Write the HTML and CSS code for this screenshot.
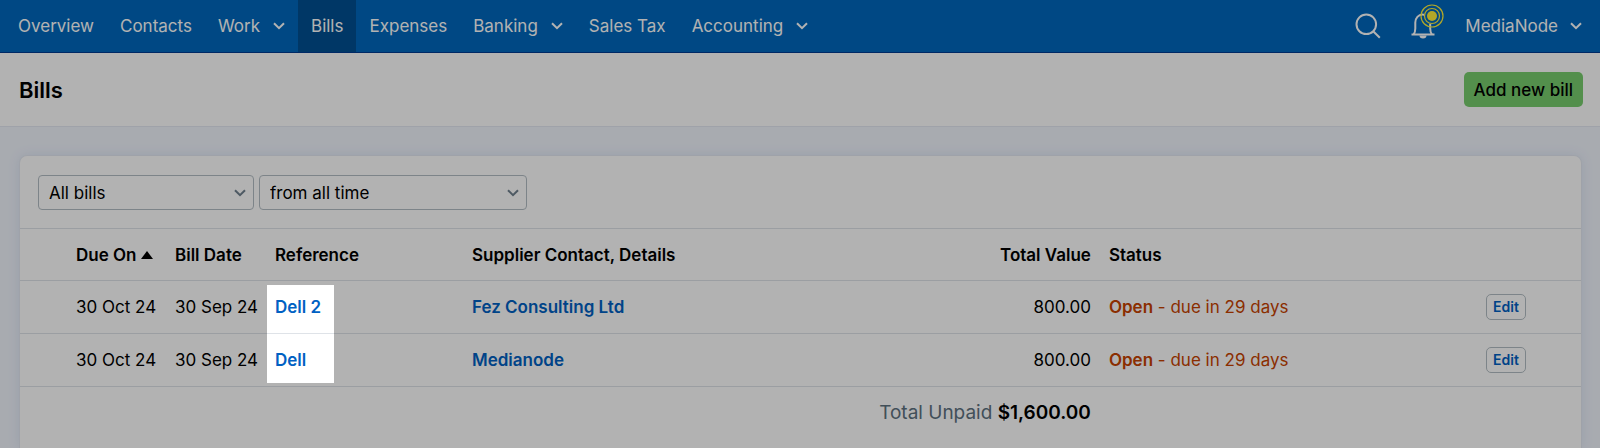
FILE: index.html
```html
<!DOCTYPE html>
<html lang="en">

<head>
  <meta charset="utf-8">
  <title>Bills</title>
  <link rel="stylesheet" href="styles.css">
</head>

<body>
  <nav class="navbar">
    <ul class="nav-list">
      <li><a href="#">Overview</a></li>
      <li><a href="#">Contacts</a></li>
      <li>
        <a href="#">Work
          <svg class="chevron" viewBox="0 0 12 8"><path d="M1 1.2l5 5 5-5" /></svg>
        </a>
      </li>
      <li><a href="#" class="active">Bills</a></li>
      <li><a href="#">Expenses</a></li>
      <li>
        <a href="#">Banking
          <svg class="chevron" viewBox="0 0 12 8"><path d="M1 1.2l5 5 5-5" /></svg>
        </a>
      </li>
      <li><a href="#">Sales Tax</a></li>
      <li>
        <a href="#">Accounting
          <svg class="chevron" viewBox="0 0 12 8"><path d="M1 1.2l5 5 5-5" /></svg>
        </a>
      </li>
    </ul>
    <div class="nav-tools">
      <button class="icon-btn" aria-label="Search">
        <svg width="26" height="26" viewBox="0 0 26 26">
          <circle cx="11.3" cy="11.3" r="9.8" />
          <path d="M18.2 18.2l6.6 6.6" />
        </svg>
      </button>
      <button class="icon-btn bell" aria-label="Notifications">
        <svg width="24" height="26" viewBox="0 0 24 26">
          <path d="M.5 21.600h23M2.500 21.500c1.300-1.500 1.800-3.500 1.800-6V9.500c0-4.500 3.200-8 7.200-8s7.700 3.500 7.700 8v6c0 2.500.5 4.500 1.800 6" />
          <path class="fill" d="M8.500 22.500h7a3.500 3 0 0 1-7 0z" />
        </svg>
        <svg class="beacon" width="24" height="24" viewBox="0 0 24 24">
          <circle class="halo" cx="12" cy="12" r="8" />
          <circle cx="12" cy="12" r="11" />
          <circle cx="12" cy="12" r="7.500" />
          <circle class="dot" cx="12" cy="12" r="5" />
        </svg>
      </button>
      <a href="#" class="account">MediaNode
        <svg class="chevron" viewBox="0 0 12 8"><path d="M1 1.2l5 5 5-5" /></svg>
      </a>
    </div>
  </nav>

  <header class="page-header">
    <h1>Bills</h1>
    <button class="btn-add">Add new bill</button>
  </header>

  <main class="card">
    <form class="filters">
      <div class="select">
        <select class="bill-type" aria-label="Bill type">
          <option>All bills</option>
        </select>
        <svg class="chevron" viewBox="0 0 12 8"><path d="M1 1.2l5 5 5-5" /></svg>
      </div>
      <div class="select">
        <select class="period" aria-label="Period">
          <option>from all time</option>
        </select>
        <svg class="chevron" viewBox="0 0 12 8"><path d="M1 1.2l5 5 5-5" /></svg>
      </div>
    </form>

    <table class="bills">
      <colgroup>
        <col class="c-pad">
        <col class="c-due">
        <col class="c-date">
        <col class="c-ref">
        <col class="c-supplier">
        <col class="c-total">
        <col class="c-status">
        <col class="c-edit">
      </colgroup>
      <thead>
        <tr>
          <th></th>
          <th>Due On<svg class="sort" width="12" height="8" viewBox="0 0 12 8"><path d="M0 8l6-8 6 8z" /></svg></th>
          <th>Bill Date</th>
          <th>Reference</th>
          <th>Supplier Contact, Details</th>
          <th class="num">Total Value</th>
          <th>Status</th>
          <th></th>
        </tr>
      </thead>
      <tbody>
        <tr>
          <td></td>
          <td>30 Oct 24</td>
          <td>30 Sep 24</td>
          <td class="ref"><a href="#">Dell 2</a><span class="spotlight"></span></td>
          <td><a href="#">Fez Consulting Ltd</a></td>
          <td class="num">800.00</td>
          <td class="status"><b>Open</b> - due in 29 days</td>
          <td><button class="btn-edit">Edit</button></td>
        </tr>
        <tr>
          <td></td>
          <td>30 Oct 24</td>
          <td>30 Sep 24</td>
          <td><a href="#">Dell</a></td>
          <td><a href="#">Medianode</a></td>
          <td class="num">800.00</td>
          <td class="status"><b>Open</b> - due in 29 days</td>
          <td><button class="btn-edit">Edit</button></td>
        </tr>
      </tbody>
      <tfoot>
        <tr>
          <td colspan="6" class="num">Total Unpaid <b>$1,600.00</b></td>
          <td colspan="2"></td>
        </tr>
      </tfoot>
    </table>
  </main>
</body>

</html>
```
FILE: styles.css
```css
* {
  box-sizing: border-box;
  margin: 0;
  padding: 0;
}

body {
  display: flex;
  flex-direction: column;
  min-height: 100vh;
  background: #f1f5fd;
  color: #000;
  font: 17px/24px Inter, "Liberation Sans", sans-serif;
  overflow-x: hidden;
}

button,
select {
  font: inherit;
}

a {
  color: #0061c3;
  text-decoration: none;
}

.chevron {
  width: 12px;
  height: 8px;
  fill: none;
  stroke: currentColor;
  stroke-width: 2;
}

/* top bar */
.navbar {
  display: flex;
  justify-content: space-between;
  height: 53px;
  padding: 0 18px 0 5px;
  background: #0068bd;
  border-bottom: 1px solid #003c91;
}

.nav-list {
  display: flex;
  list-style: none;
}

.navbar a {
  display: flex;
  align-items: center;
  gap: 13px;
  height: 52px;
  padding: 0 13px;
  color: #fff;
}

.navbar a.active {
  background: #004f93;
}

.nav-tools {
  display: flex;
  align-items: center;
  gap: 30px;
}

.nav-tools .account {
  gap: 12px;
  padding: 0;
}

.icon-btn {
  position: relative;
  height: 26px;
  background: none;
  border: 0;
}

.icon-btn svg {
  display: block;
  fill: none;
  stroke: #fff;
  stroke-width: 2;
}

.icon-btn .fill {
  fill: #fff;
  stroke: none;
}

.icon-btn .beacon {
  position: absolute;
  top: -9px;
  right: -9px;
  stroke: #fff03a;
  stroke-width: 1.2;
}

.beacon .halo {
  fill: #0068bd;
  stroke: none;
}

.beacon .dot {
  fill: #fff03a;
  stroke: none;
}

/* title row */
.page-header {
  display: flex;
  align-items: center;
  justify-content: space-between;
  height: 74px;
  padding: 0 17px 0 19px;
  background: #fff;
  border-bottom: 1px solid #e4e9f2;
}

h1 {
  font-size: 22px;
  font-weight: 600;
}

.btn-add {
  height: 35px;
  padding: 0 10px;
  background: #78cd6e;
  border: 0;
  border-radius: 5px;
  font-weight: 500;
}

/* list */
.card {
  flex: 1;
  margin: 28px 18px 0 19px;
  background: #fff;
  border: 1px solid #e4e9f2;
  border-bottom: 0;
  border-radius: 8px 8px 0 0;
  box-shadow: 0 0 12px #dbe4f5;
}

.filters {
  display: flex;
  gap: 5px;
  padding: 19px 18px 18px;
}

.select {
  position: relative;
}

.select select {
  display: block;
  appearance: none;
  height: 35px;
  padding: 0 10px;
  background: #fff;
  border: 1px solid #b4bec4;
  border-radius: 4px;
  color: #000;
}

.bill-type {
  width: 216px;
}

.period {
  width: 268px;
}

.select .chevron {
  position: absolute;
  top: 14px;
  right: 8px;
  color: #70818f;
  pointer-events: none;
}

.bills {
  width: 100%;
  table-layout: fixed;
  border-collapse: collapse;
}

.c-pad { width: 47px; }
.c-due { width: 99px; }
.c-date { width: 100px; }
.c-ref { width: 197px; }
.c-supplier { width: 31%; }
.c-total { width: 153px; }
.c-edit { width: 104px; }

.bills th,
.bills td {
  height: 53px;
  padding: 0 9px;
  border-top: 1px solid #dfe3e8;
  text-align: left;
  white-space: nowrap;
}

.bills th {
  height: 52px;
  font-weight: 600;
}

.bills .num {
  text-align: right;
}

.bills td a {
  font-weight: 600;
}

.bills b {
  font-weight: 600;
}

.sort {
  margin: 0 0 2px 4px;
}

.status {
  color: #c74300;
}

.btn-edit {
  height: 26px;
  padding: 0 6px;
  background: #fff;
  border: 1px solid #b4bec4;
  border-radius: 5px;
  color: #0061c3;
  font-size: 14px;
  font-weight: 600;
}

.bills tfoot td {
  color: #5d7180;
  font-size: 19px;
}

.bills tfoot b {
  color: #000;
}

/* dims the page around the reference links */
.ref {
  position: relative;
}

.spotlight {
  position: absolute;
  top: 4px;
  left: 1px;
  z-index: 10;
  width: 67px;
  height: 98px;
  box-shadow: 0 0 0 2000px rgba(0, 0, 0, 0.3);
  pointer-events: none;
}
```
